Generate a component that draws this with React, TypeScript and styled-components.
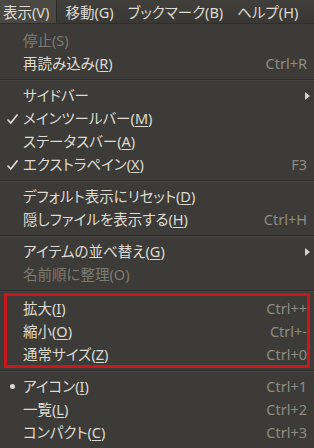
import React from 'react';
import styled, { createGlobalStyle } from 'styled-components';

type Item = {
  label: string;
  mnemonic?: string;
  accel?: string;
  disabled?: boolean;
  submenu?: boolean;
  mark?: 'check' | 'radio';
};

const groups: { items: Item[]; highlight?: boolean }[] = [
  {
    items: [
      { label: '停止', mnemonic: 'S', disabled: true },
      { label: '再読み込み', mnemonic: 'R', accel: 'Ctrl+R' },
    ],
  },
  {
    items: [
      { label: 'サイドバー', submenu: true },
      { label: 'メインツールバー', mnemonic: 'M', mark: 'check' },
      { label: 'ステータスバー', mnemonic: 'A' },
      { label: 'エクストラペイン', mnemonic: 'X', mark: 'check', accel: 'F3' },
    ],
  },
  {
    items: [
      { label: 'デフォルト表示にリセット', mnemonic: 'D' },
      { label: '隠しファイルを表示する', mnemonic: 'H', accel: 'Ctrl+H' },
    ],
  },
  {
    items: [
      { label: 'アイテムの並べ替え', mnemonic: 'G', submenu: true },
      { label: '名前順に整理', mnemonic: 'O', disabled: true },
    ],
  },
  {
    highlight: true,
    items: [
      { label: '拡大', mnemonic: 'I', accel: 'Ctrl++' },
      { label: '縮小', mnemonic: 'O', accel: 'Ctrl+-' },
      { label: '通常サイズ', mnemonic: 'Z', accel: 'Ctrl+0' },
    ],
  },
  {
    items: [
      { label: 'アイコン', mnemonic: 'I', mark: 'radio', accel: 'Ctrl+1' },
      { label: '一覧', mnemonic: 'L', accel: 'Ctrl+2' },
      { label: 'コンパクト', mnemonic: 'C', accel: 'Ctrl+3' },
    ],
  },
];

const titles = ['表示(V)', '移動(G)', 'ブックマーク(B)', 'ヘルプ(H)'];

const CheckIcon = () => (
  <svg width='13' height='12' viewBox='0 0 13 12'>
    <polyline
      points='1.5,6.5 4.8,10 11.5,1.5'
      fill='none'
      stroke='#dfdbd2'
      strokeWidth='1.7'
    />
  </svg>
);

const MenuRow = ({ item }: { item: Item }) => (
  <Row disabled={item.disabled}>
    <Mark>
      {item.mark === 'check' && <CheckIcon />}
      {item.mark === 'radio' && <Dot />}
    </Mark>
    <Label>
      {item.label}
      {item.mnemonic && (
        <>
          (
          {item.disabled ? item.mnemonic : <u>{item.mnemonic}</u>})
        </>
      )}
    </Label>
    {item.accel && <Accel>{item.accel}</Accel>}
    {item.submenu && <Arrow />}
  </Row>
);

const App = () => {
  return (
    <>
      <GlobalStyle />
      <MenuBar>
        {titles.map((title, i) => (
          <Title key={title} active={i === 0}>
            {title}
          </Title>
        ))}
      </MenuBar>
      <Menu>
        {groups.map((group, gi) => (
          <React.Fragment key={gi}>
            {gi > 0 && <Separator />}
            <Group highlight={group.highlight}>
              {group.items.map((item) => (
                <MenuRow key={item.label} item={item} />
              ))}
            </Group>
          </React.Fragment>
        ))}
      </Menu>
    </>
  );
};

export default App;

const GlobalStyle = createGlobalStyle`
  body {
    margin: 0;
    background: #3c3b37;
    font-family: 'Noto Sans', 'Noto Sans CJK JP', sans-serif;
    font-size: 14.5px;
    font-feature-settings: 'palt';
    overflow: hidden;
  }
`;

const MenuBar = styled.div`
  display: flex;
  height: 24px;
  background: linear-gradient(#403f3a, #393834);
  border-bottom: 1px solid #2f2e2b;
  box-sizing: border-box;
`;

const Title = styled.div<{ active?: boolean }>`
  display: flex;
  align-items: center;
  padding: ${({ active }) => (active ? '0 7px 0 3px' : '0 6px 0 8px')};
  color: #dfdbd2;
  background: ${({ active }) => (active ? '#4a4843' : 'transparent')};
  border-right: ${({ active }) => (active ? '1px solid #2c2b28' : 'none')};
  white-space: nowrap;
`;

const Menu = styled.div`
  display: flex;
  flex-direction: column;
  padding-top: 5px;
  background: #3c3b37;
`;

const Group = styled.div<{ highlight?: boolean }>`
  position: relative;
  display: flex;
  flex-direction: column;
  padding-top: ${({ highlight }) => (highlight ? '2px' : '0')};

  &::after {
    content: '';
    display: ${({ highlight }) => (highlight ? 'block' : 'none')};
    position: absolute;
    top: -2px;
    bottom: -2px;
    left: 4px;
    right: 4px;
    border: 3px solid #c8181e;
    pointer-events: none;
  }
`;

const Row = styled.div<{ disabled?: boolean }>`
  display: flex;
  align-items: center;
  height: 23px;
  padding: 0 7px 0 5px;
  color: ${({ disabled }) => (disabled ? '#7d7a73' : '#dfdbd2')};
  line-height: 1;
  white-space: nowrap;

  u {
    text-decoration-thickness: 1px;
    text-underline-offset: 2px;
  }
`;

const Mark = styled.span`
  display: flex;
  align-items: center;
  justify-content: center;
  width: 14px;
  margin-right: 4px;
`;

const Dot = styled.span`
  width: 5px;
  height: 5px;
  border-radius: 50%;
  background: #dfdbd2;
`;

const Label = styled.span`
  flex: 1;
`;

const Accel = styled.span`
  color: #8e8b84;
`;

const Arrow = styled.span`
  width: 0;
  height: 0;
  border-top: 4px solid transparent;
  border-bottom: 4px solid transparent;
  border-left: 5px solid #d6d2c9;
  margin-right: -3px;
`;

const Separator = styled.div`
  display: flex;
  flex-direction: column;
  justify-content: center;
  height: 9px;

  &::before {
    content: '';
    height: 1px;
    background: #2d2c29;
  }
  &::after {
    content: '';
    height: 1px;
    background: #46453f;
  }
`;
